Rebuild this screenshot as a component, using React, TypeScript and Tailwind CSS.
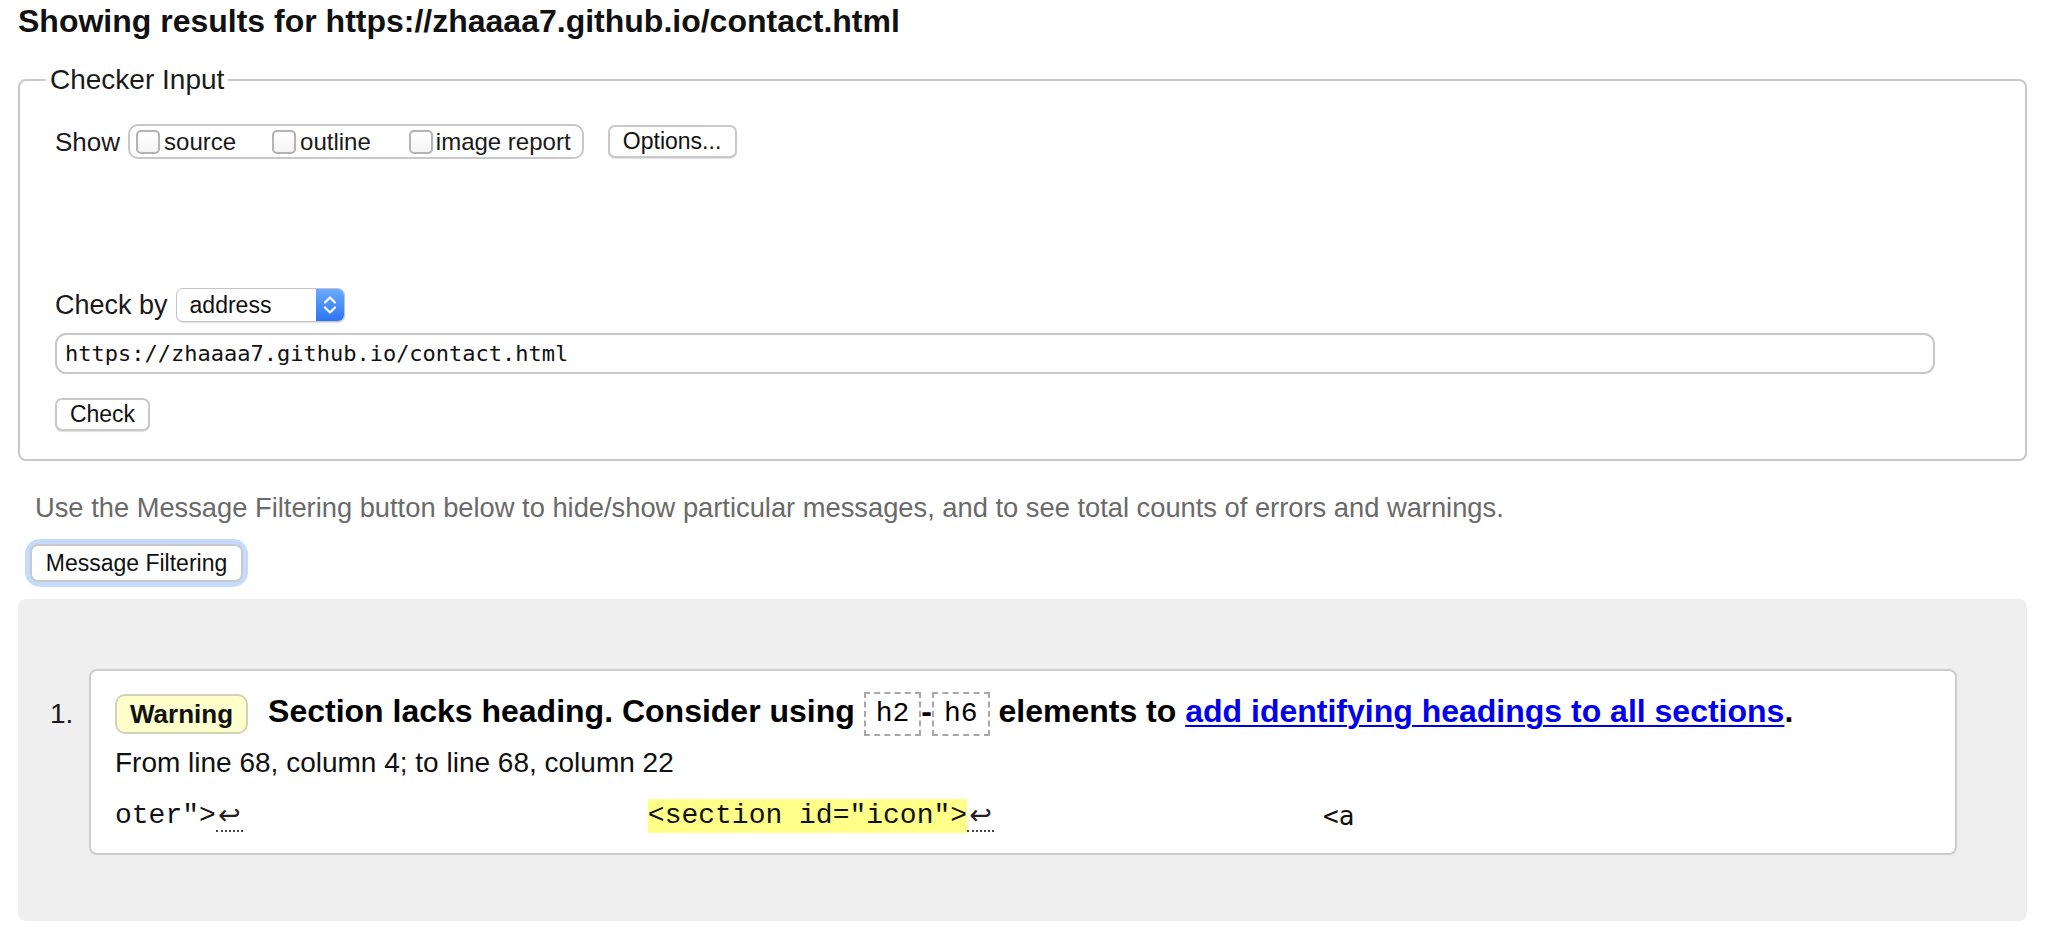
import React from "react";

const Checkbox = () => (
  <span className="inline-block h-[24px] w-[24px] shrink-0 rounded-[5px] border-2 border-[#b4b4b4] bg-gradient-to-b from-white to-[#f4f4f4]" />
);

const MacButton = ({ label, className = "" }: { label: string; className?: string }) => (
  <div
    className={`flex items-center justify-center rounded-[7px] border-2 border-[#c9c9c9] bg-white text-[23px] leading-none text-[#111] shadow-[0_1px_1px_rgba(0,0,0,0.12)] ${className}`}
  >
    {label}
  </div>
);

const Chevrons = () => (
  <svg viewBox="0 0 28 34" className="h-[34px] w-[28px]" aria-hidden="true">
    <path d="M9 14.5L14 9.5l5 5" fill="none" stroke="white" strokeWidth="2.2" strokeLinecap="round" strokeLinejoin="round" />
    <path d="M9 19.5l5 5 5-5" fill="none" stroke="white" strokeWidth="2.2" strokeLinecap="round" strokeLinejoin="round" />
  </svg>
);

const CodeBox = ({ children }: { children: React.ReactNode }) => (
  <span className="inline-block border-2 border-dashed border-[#a8a8a8] px-[10px] py-[4px] align-middle font-['Liberation_Mono',monospace] text-[28px] font-normal leading-[32px]">
    {children}
  </span>
);

const ReturnMark = () => (
  <span className="inline-block w-[27px] border-b-2 border-dotted border-[#444] text-center font-['DejaVu_Sans',sans-serif] text-[27px] leading-[30px] text-[#222]">
    ↩
  </span>
);

export default function App() {
  return (
    <div className="min-h-screen bg-white pl-[18px] pr-[19px] font-['Liberation_Sans',Arial,sans-serif] text-[#1a1a1a]">
      <h2 className="pt-[3px] text-[32px] font-bold leading-[36px] text-[#111]">
        Showing results for https://zhaaaa7.github.io/contact.html
      </h2>

      <fieldset className="mt-[25px] rounded-[8px] border-2 border-[#c8c8c8] pb-[28px] pl-[35px] pt-[28px]">
        <legend className="-ml-[9px] px-[4px] text-[28px] leading-[32px]">Checker Input</legend>

        <div className="flex h-[35px] items-center">
          <span className="text-[26px] leading-none">Show</span>
          <div className="ml-[8px] flex h-[35px] items-center rounded-[10px] border-2 border-[#c8c8c8] pl-[6px] pr-[11px]">
            <span className="flex">
              <Checkbox />
            </span>
            <span className="ml-[4px] text-[24px] leading-none">source</span>
            <span className="ml-[36px] flex">
              <Checkbox />
            </span>
            <span className="ml-[4px] text-[24px] leading-none">outline</span>
            <span className="ml-[38px] flex">
              <Checkbox />
            </span>
            <span className="ml-[3px] text-[24px] leading-none">image report</span>
          </div>
          <MacButton label="Options..." className="ml-[24px] h-[33px] w-[129px]" />
        </div>

        <div className="h-[129px]" />

        <div className="flex h-[34px] items-center">
          <span className="text-[27px] leading-none">Check by</span>
          <div className="ml-[8px] flex h-[34px] w-[169px] items-stretch overflow-hidden rounded-[7px] border border-[#c4c4c4] bg-white shadow-[0_1px_1px_rgba(0,0,0,0.12)]">
            <span className="flex flex-1 items-center pl-[13px] text-[23px] leading-none text-[#111]">address</span>
            <span className="flex w-[28px] items-center justify-center bg-gradient-to-b from-[#69aaff] to-[#2c74f2]">
              <Chevrons />
            </span>
          </div>
        </div>

        <div className="mt-[11px] flex h-[41px] w-[1880px] items-center rounded-[11px] border-2 border-[#c8c8c8] px-[8px] font-['DejaVu_Sans_Mono',monospace] text-[22px] text-[#111]">
          https://zhaaaa7.github.io/contact.html
        </div>

        <MacButton label="Check" className="mt-[24px] h-[33px] w-[95px]" />
      </fieldset>

      <p className="mt-[31px] pl-[17px] text-[27.3px] leading-[32px] text-[#6a6a6a]">
        Use the Message Filtering button below to hide/show particular messages, and to see total counts of errors and warnings.
      </p>

      <div className="ml-[12px] mt-[20px] inline-block rounded-[10px] shadow-[0_0_0_5px_#c4dbfd]">
        <div className="flex h-[38px] w-[213px] items-center justify-center rounded-[8px] border-2 border-[#c9c9c9] bg-white text-[23px] leading-none text-[#111]">
          Message Filtering
        </div>
      </div>

      <div className="mt-[17px] flex items-start rounded-[8px] bg-[#efefef] pb-[66px] pt-[70px]">
        <div className="mt-[29px] w-[71px] pl-[32px] text-[28px] leading-[32px]">1.</div>
        <div className="w-[1868px] rounded-[8px] border-2 border-[#cccccc] bg-white pb-[20px] pl-[24px] pt-[21px]">
          <div className="flex h-[44px] items-center">
            <span className="flex h-[40px] items-center rounded-[10px] border-2 border-[#d2d2b8] bg-[#ffffcc] px-[13px] text-[26px] font-bold leading-none text-[#111]">
              Warning
            </span>
            <p className="ml-[20px] whitespace-nowrap text-[32px] font-bold leading-[36px] text-black">
              Section lacks heading. Consider using <CodeBox>h2</CodeBox>-<CodeBox>h6</CodeBox> elements to{" "}
              <a href="#" className="text-[#0000ee] underline decoration-2 underline-offset-[3px]">
                add identifying headings to all sections
              </a>
              .
            </p>
          </div>

          <p className="mt-[11px] text-[28px] leading-[32px] text-[#111]">
            From line 68, column 4; to line 68, column 22
          </p>

          <div className="mt-[20px] flex h-[34px] items-center whitespace-pre font-['Liberation_Mono',monospace] text-[28px] leading-[34px] text-[#111]">
            <span>oter"&gt;</span>
            <ReturnMark />
            <span className="ml-[405px] bg-[#ffff8a]">&lt;section id="icon"&gt;</span>
            <ReturnMark />
            <span className="ml-[329px] font-['DejaVu_Sans_Mono',monospace] text-[26px]">&lt;a</span>
          </div>
        </div>
      </div>
    </div>
  );
}
